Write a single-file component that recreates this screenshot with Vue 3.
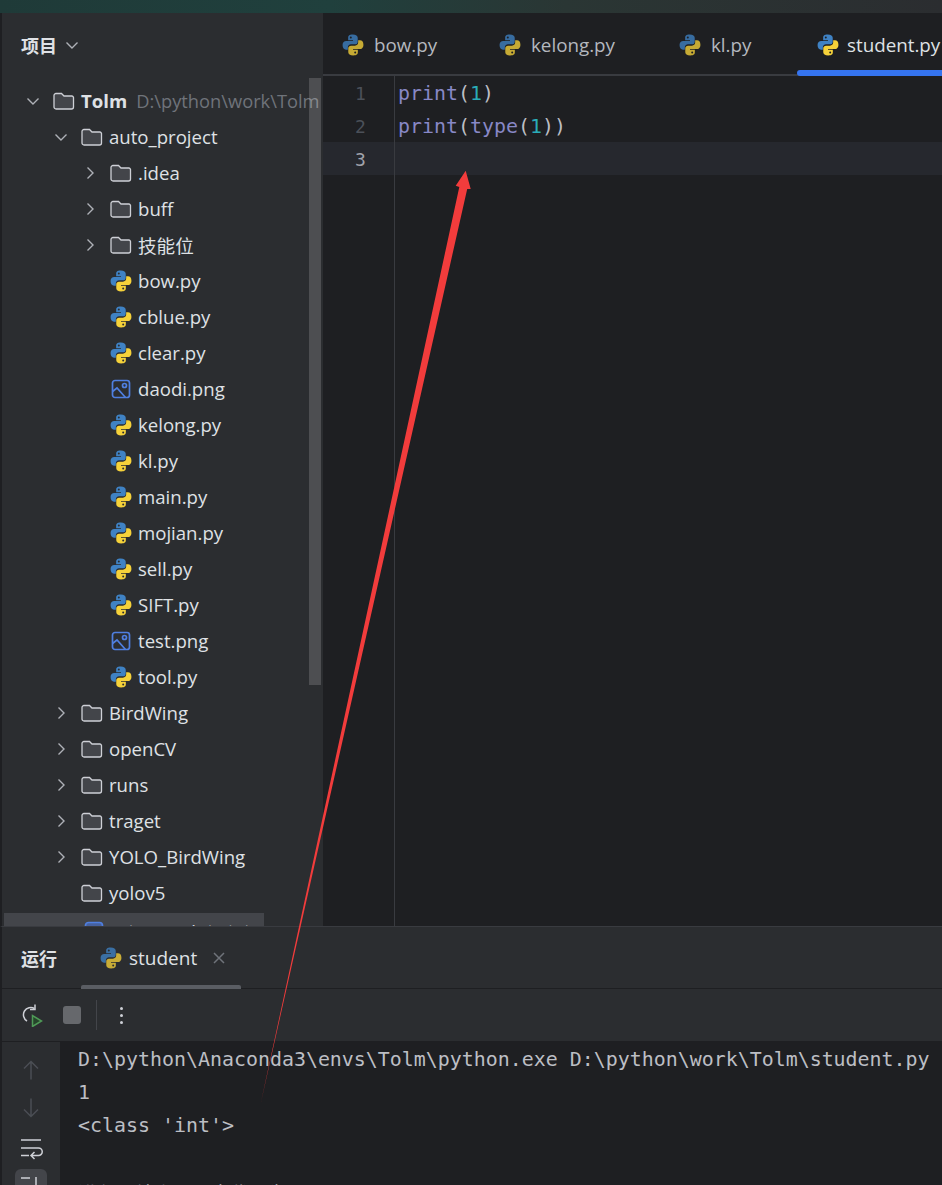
<script setup>
const tree = [
  { name: 'auto_project', d: 1, kind: 'folder', open: true },
  { name: '.idea', d: 2, kind: 'folder', closed: true },
  { name: 'buff', d: 2, kind: 'folder', closed: true },
  { name: '技能位', d: 2, kind: 'folder', closed: true },
  { name: 'bow.py', d: 2, kind: 'py' },
  { name: 'cblue.py', d: 2, kind: 'py' },
  { name: 'clear.py', d: 2, kind: 'py' },
  { name: 'daodi.png', d: 2, kind: 'img' },
  { name: 'kelong.py', d: 2, kind: 'py' },
  { name: 'kl.py', d: 2, kind: 'py' },
  { name: 'main.py', d: 2, kind: 'py' },
  { name: 'mojian.py', d: 2, kind: 'py' },
  { name: 'sell.py', d: 2, kind: 'py' },
  { name: 'SIFT.py', d: 2, kind: 'py' },
  { name: 'test.png', d: 2, kind: 'img' },
  { name: 'tool.py', d: 2, kind: 'py' },
  { name: 'BirdWing', d: 1, kind: 'folder', closed: true },
  { name: 'openCV', d: 1, kind: 'folder', closed: true },
  { name: 'runs', d: 1, kind: 'folder', closed: true },
  { name: 'traget', d: 1, kind: 'folder', closed: true },
  { name: 'YOLO_BirdWing', d: 1, kind: 'folder', closed: true },
  { name: 'yolov5', d: 1, kind: 'folder' }
]
const tabs = [
  { name: 'bow.py', w: 157 },
  { name: 'kelong.py', w: 180 },
  { name: 'kl.py', w: 137 },
  { name: 'student.py', w: 145, active: true }
]
const py1 = 'M9.8 0.5C6.2 0.5 5.6 2 5.6 3.4V5.6H10V6.3H3.8C2 6.3 0.5 7.6 0.5 10.1C0.5 13 1.9 14.3 3.6 14.3H5.3V12.2C5.3 10.600 6.600 9.400 8.200 9.400H11.800C13.200 9.400 14.300 8.400 14.300 7V3.400C14.300 1.800 12.800 0.500 9.800 0.500Z'
const py2 = 'M10.2 19.500C13.800 19.500 14.400 18 14.400 16.600V14.400H10V13.700H16.200C18 13.700 19.500 12.400 19.500 9.900C19.500 7 18.100 5.700 16.400 5.700H14.700V7.800C14.700 9.400 13.400 10.600 11.800 10.600H8.200C6.800 10.600 5.700 11.600 5.700 13V16.600C5.700 18.200 7.200 19.500 10.200 19.500Z'
</script>

<template>
  <div class="page">
    <div class="titlebar"></div>
    <div class="main">
      <aside class="project">
        <div class="project-head">
          <span class="head-title">项目</span>
          <svg class="head-chev" width="14" height="14" viewBox="0 0 14 14"><path d="M1.5 4.5 7 10l5.500-5.500" /></svg>
        </div>
        <div class="tree">
          <div class="row root">
            <svg class="chev" width="14" height="14" viewBox="0 0 14 14"><path d="M1.5 4.5 7 10l5.500-5.500" /></svg>
            <svg class="folder" width="22" height="20" viewBox="0 0 22 20"><path d="M3 2.500h5.500l2.500 2.500h8a2 2 0 0 1 1.500 1.500V16a2 2 0 0 1-2 2H3a2 2 0 0 1-2-2V4.500a2 2 0 0 1 2-2Z" /></svg>
            <span class="root-name">Tolm</span>
            <span class="root-path">D:\python\work\Tolm</span>
          </div>
          <div v-for="item in tree" :key="item.name" class="row" :class="'depth' + item.d">
            <svg v-if="item.open" class="chev" width="14" height="14" viewBox="0 0 14 14"><path d="M1.5 4.5 7 10l5.500-5.500" /></svg>
            <svg v-else-if="item.closed" class="chev" width="14" height="14" viewBox="0 0 14 14"><path d="M4.500 1.500 10 7l-5.500 5.500" /></svg>
            <span v-else class="chev-space"></span>
            <svg v-if="item.kind === 'folder'" class="folder" width="22" height="20" viewBox="0 0 22 20"><path d="M3 2.500h5.500l2.500 2.500h8a2 2 0 0 1 1.500 1.500V16a2 2 0 0 1-2 2H3a2 2 0 0 1-2-2V4.500a2 2 0 0 1 2-2Z" /></svg>
            <svg v-else-if="item.kind === 'py'" class="ico" width="22" height="22" viewBox="0 0 20 20">
              <path :d="py1" fill="#3f82c4" /><path :d="py2" fill="#f6d23a" />
              <circle cx="8" cy="3.100" r="0.900" fill="#2b2d30" /><circle cx="12" cy="16.900" r="0.900" fill="#2b2d30" />
            </svg>
            <svg v-else class="ico imgico" width="20" height="20" viewBox="0 0 20 20">
              <rect x="1.500" y="1.500" width="17" height="17" rx="2.500" />
              <circle cx="13.500" cy="6.500" r="2" />
              <path d="M1.500 12.500 6 9l8.500 9.500" />
            </svg>
            <span class="name">{{ item.name }}</span>
          </div>
          <div class="row depth1 selected">
            <span class="chev-space"></span>
            <svg class="ico imgico filled" width="20" height="20" viewBox="0 0 20 20"><rect x="1.500" y="1.500" width="17" height="17" rx="3" /></svg>
            <span class="name">setup_scripts.txt</span>
          </div>
        </div>
        <div class="scrollbar"></div>
      </aside>
      <section class="editor">
        <div class="tabs">
          <div v-for="t in tabs" :key="t.name" class="tab" :class="{ active: t.active }" :style="{ width: t.w + 'px' }">
            <svg width="22" height="22" viewBox="0 0 20 20" :class="{ dim: !t.active }">
              <path :d="py1" fill="#3f82c4" /><path :d="py2" fill="#f6d23a" />
              <circle cx="8" cy="3.100" r="0.900" fill="#1e1f22" /><circle cx="12" cy="16.900" r="0.900" fill="#1e1f22" />
            </svg>
            <span>{{ t.name }}</span>
          </div>
        </div>
        <div class="code">
          <div class="codeline"><span class="ln">1</span><span class="src"><span class="fn">print</span><span class="par">(</span><span class="num">1</span><span class="par">)</span></span></div>
          <div class="codeline"><span class="ln">2</span><span class="src"><span class="fn">print</span><span class="par">(</span><span class="fn">type</span><span class="par">(</span><span class="num">1</span><span class="par">))</span></span></div>
          <div class="codeline current"><span class="ln">3</span><span class="src"></span></div>
          <div class="gutter-rest"></div>
        </div>
      </section>
    </div>
    <section class="runpanel">
      <div class="run-head">
        <span class="head-title">运行</span>
        <div class="run-tab">
          <svg class="dim" width="22" height="22" viewBox="0 0 20 20">
            <path :d="py1" fill="#3f82c4" /><path :d="py2" fill="#f6d23a" />
            <circle cx="8" cy="3.100" r="0.900" fill="#2b2d30" /><circle cx="12" cy="16.900" r="0.900" fill="#2b2d30" />
          </svg>
          <span class="run-name">student</span>
          <svg class="close" width="12" height="12" viewBox="0 0 12 12"><path d="M1 1l10 10M11 1 1 11" /></svg>
        </div>
      </div>
      <div class="run-tools">
        <svg class="rerun" width="24" height="24" viewBox="0 0 24 24">
          <path class="g" d="M15.500 5.500A7 7 0 1 0 8 18" />
          <path class="g" d="M16 1.500v5h-5" />
          <path class="p" d="M13.500 12.500v11l9-5.500Z" />
        </svg>
        <span class="stop"></span>
        <span class="tool-sep"></span>
        <span class="dots"><i></i><i></i><i></i></span>
      </div>
      <div class="run-body">
        <div class="side">
          <svg width="20" height="20" viewBox="0 0 20 20"><path d="M10 19.500V1.500M3 8.500l7-7 7 7" /></svg>
          <svg width="20" height="20" viewBox="0 0 20 20"><path d="M10 .5v18M3 11.500l7 7 7-7" /></svg>
          <svg class="wrap" width="24" height="22" viewBox="0 0 24 22"><path d="M2 2h20M2 10h17.500a3.500 3.500 0 0 1 0 7.500H12M15.500 14l-3.500 3.500 3.500 3.500M2 17.500h8" /></svg>
          <div class="scroll-btn"><svg width="24" height="24" viewBox="0 0 24 24"><path d="M2 3h9M17 2v16" /></svg></div>
        </div>
        <div class="console">
          <div>D:\python\Anaconda3\envs\Tolm\python.exe D:\python\work\Tolm\student.py</div>
          <div>1</div>
          <div>&lt;class 'int'&gt;</div>
          <div>&nbsp;</div>
          <div class="exit">进程已结束，退出代码为 0</div>
        </div>
      </div>
    </section>
    <svg class="arrow" width="942" height="1185" viewBox="0 0 942 1185">
      <polygon points="261,1102 459.300,187 455.700,185.700 465.700,170.700 470.700,189 467.200,189" fill="#f23c3c" />
    </svg>
  </div>
</template>

<style scoped>
.page {
  position: relative;
  width: 942px;
  height: 1185px;
  overflow: hidden;
  background: #1e1f22;
  display: flex;
  flex-direction: column;
  font-family: "Open Sans", "Noto Sans CJK SC", sans-serif;
  color: #dfe1e5;
}
.titlebar {
  height: 13px;
  flex: none;
  background: linear-gradient(90deg, #1f3a38 0%, #20403d 35%, #2a3634 60%, #2b2d30 100%);
}
.main {
  height: 913px;
  flex: none;
  display: flex;
  overflow: hidden;
}
.project {
  position: relative;
  width: 323px;
  flex: none;
  background: #2b2d30;
  border-left: 2px solid #1e1f22;
  box-sizing: border-box;
  overflow: hidden;
}
.project-head {
  height: 70px;
  display: flex;
  align-items: center;
  gap: 8px;
  padding-left: 19px;
  padding-bottom: 6px;
  box-sizing: border-box;
}
.head-title {
  font-size: 18px;
  font-weight: 700;
  color: #dfe1e5;
  font-family: "Noto Sans CJK SC", sans-serif;
}
.head-chev path, .chev path {
  fill: none;
  stroke: #aeb1b7;
  stroke-width: 1.4;
}
.tree {
  display: flex;
  flex-direction: column;
  white-space: nowrap;
}
.row {
  height: 36px;
  flex: none;
  display: flex;
  align-items: center;
  font-size: 18.6px;
  position: relative;
}
.name, .root-name, .root-path {
  padding-bottom: 2px;
}
.root { padding-left: 24px; }
.depth1 { padding-left: 52px; }
.depth2 { padding-left: 81px; }
.chev, .chev-space {
  flex: none;
  width: 14px;
  height: 14px;
  margin-right: 13px;
}
.folder {
  flex: none;
  margin-right: 6px;
}
.folder path {
  fill: #43454a;
  stroke: #ced0d6;
  stroke-width: 1.3;
}
.ico { flex: none; margin-right: 6px; }
.imgico { margin-left: 1px; margin-right: 7px; }
.imgico rect, .imgico circle, .imgico path {
  fill: none;
  stroke: #4f7fe0;
  stroke-width: 1.7;
}
.imgico.filled { margin-left: 3px; margin-right: 5px; }
.imgico.filled rect { fill: #46619f; }
.root-name {
  font-weight: 700;
  color: #dfe1e5;
  margin-right: 9px;
}
.root-path {
  color: #6f737a;
  font-size: 18.3px;
}
.selected {
  background: #43454a;
  margin-left: 2px;
  width: 260px;
  padding-left: 50px;
  box-sizing: border-box;
  margin-top: 2px;
}
.scrollbar {
  position: absolute;
  left: 307px;
  top: 65px;
  width: 12px;
  height: 607px;
  background: rgba(255, 255, 255, 0.16);
}
.editor {
  flex: 1;
  min-width: 0;
  display: flex;
  flex-direction: column;
}
.tabs {
  height: 63px;
  flex: none;
  display: flex;
  border-bottom: 2px solid #393b40;
  box-sizing: border-box;
  white-space: nowrap;
}
.tab {
  flex: none;
  display: flex;
  align-items: center;
  gap: 10px;
  padding-left: 19px;
  padding-top: 2px;
  box-sizing: border-box;
  font-size: 18.8px;
  color: #b4b8bf;
  position: relative;
}
.tab.active {
  color: #dfe1e5;
  padding-left: 20px;
  gap: 8px;
}
.tab.active::after {
  content: "";
  position: absolute;
  left: 0;
  right: 0;
  bottom: -2px;
  height: 6px;
  border-radius: 3px 0 0 3px;
  background: #3574f0;
}
.dim { opacity: 0.78; }
.code {
  flex: 1;
  display: flex;
  flex-direction: column;
  font-family: "DejaVu Sans Mono", monospace;
  font-size: 19.93px;
}
.codeline {
  height: 33px;
  flex: none;
  display: flex;
  align-items: center;
}
.ln {
  width: 72px;
  flex: none;
  box-sizing: border-box;
  height: 100%;
  line-height: 35px;
  border-right: 1px solid #393b40;
  padding-left: 32px;
  color: #4b5059;
  font-size: 18px;
}
.src {
  padding-left: 3px;
  padding-top: 2px;
}
.fn { color: #8888c6; }
.par { color: #bcbec4; }
.num { color: #2aacb8; }
.current { background: #26282e; }
.current .ln { color: #a1a3ab; }
.gutter-rest {
  flex: 1;
  width: 72px;
  border-right: 1px solid #393b40;
  box-sizing: border-box;
}
.runpanel {
  flex: 1;
  min-height: 0;
  display: flex;
  flex-direction: column;
  background: #2b2d30;
  border-top: 1px solid #393b40;
  border-left: 2px solid #1e1f22;
  box-sizing: border-box;
  overflow: hidden;
}
.run-head {
  height: 62px;
  flex: none;
  display: flex;
  align-items: center;
  padding-left: 19px;
  border-bottom: 1px solid #1e1f22;
  box-sizing: border-box;
}
.run-tab {
  align-self: stretch;
  width: 160px;
  margin-left: 24px;
  display: flex;
  align-items: center;
  padding-left: 19px;
  box-sizing: border-box;
  position: relative;
  gap: 7px;
  font-size: 19px;
}
.run-tab::after {
  content: "";
  position: absolute;
  left: 0;
  right: 0;
  bottom: -1px;
  height: 4px;
  border-radius: 2px 2px 0 0;
  background: #5a5d63;
}
.run-name { color: #dfe1e5; }
.close { margin-left: 9px; }
.close path { stroke: #6f737a; stroke-width: 1.5; fill: none; }
.run-tools {
  height: 53px;
  flex: none;
  display: flex;
  align-items: center;
  padding-left: 17px;
  border-bottom: 1px solid #1e1f22;
  box-sizing: border-box;
}
.rerun path { fill: none; stroke-width: 1.5; }
.rerun .g { stroke: #ced0d6; }
.rerun .p { stroke: #4f9a57; fill: #26452b; }
.stop {
  width: 18px;
  height: 18px;
  margin-left: 20px;
  border-radius: 3px;
  background: #66686c;
}
.tool-sep {
  width: 1px;
  height: 30px;
  margin-left: 15px;
  background: #43454a;
}
.dots {
  display: flex;
  flex-direction: column;
  gap: 4px;
  margin-left: 23px;
}
.dots i {
  display: block;
  width: 3px;
  height: 3px;
  border-radius: 50%;
  background: #ced0d6;
}
.run-body {
  flex: 1;
  display: flex;
  min-height: 0;
}
.side {
  width: 58px;
  flex: none;
  display: flex;
  flex-direction: column;
  align-items: center;
  padding-top: 18px;
  box-sizing: border-box;
}
.side svg { flex: none; }
.side svg:nth-child(2) { margin-top: 18px; }
.side .wrap { margin-top: 20px; }
.side svg path {
  fill: none;
  stroke: #4b4e54;
  stroke-width: 1.5;
}
.side .wrap path { stroke: #ced0d6; }
.scroll-btn {
  width: 32px;
  height: 40px;
  flex: none;
  margin-top: 9px;
  border-radius: 6px;
  background: #43454a;
  display: flex;
  justify-content: center;
  padding-top: 6px;
  box-sizing: border-box;
}
.side .scroll-btn svg { margin-top: 0; }
.side .scroll-btn path { stroke: #ced0d6; }
.console {
  flex: 1;
  background: #1e1f22;
  padding: 1px 0 0 18px;
  font-family: "DejaVu Sans Mono", "Noto Sans CJK SC", monospace;
  font-size: 19.93px;
  line-height: 33px;
  color: #bcbec4;
  white-space: pre;
  overflow: hidden;
}
.exit {
  font-size: 19px;
  padding-top: 3px;
}
.arrow {
  position: absolute;
  left: 0;
  top: 0;
  pointer-events: none;
}
</style>
